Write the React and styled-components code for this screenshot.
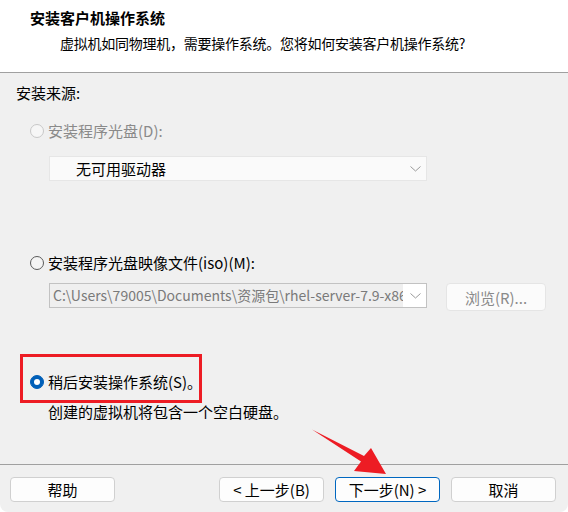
import React from "react";
import styled, { createGlobalStyle } from "styled-components";

const Global = createGlobalStyle`
  html, body { margin: 0; padding: 0; background: #ffffff; }
  body { font-family: "Microsoft YaHei", "Noto Sans CJK SC", "Noto Sans", sans-serif; }
  * { box-sizing: border-box; }
`;

const Window = styled.div`
  position: relative;
  width: 568px;
  height: 512px;
  background: #f0f0f0;
  display: flex;
  flex-direction: column;
  overflow: hidden;
  border-radius: 0 0 8px 8px;
  font-size: 15px;
  color: #000;
`;

const Header = styled.header`
  height: 73px;
  flex: none;
  background: #ffffff;
  border-bottom: 1px solid #a0a0a0;
  padding: 8px 0 0 30px;
  display: flex;
  flex-direction: column;
`;

const Title = styled.h1`
  margin: 0;
  font-size: 15px;
  font-weight: 700;
  line-height: 20px;
`;

const Subtitle = styled.p`
  margin: 5px 0 0 30px;
  font-size: 14px;
  letter-spacing: -0.25px;
  line-height: 20px;
`;

const Body = styled.main`
  flex: 1;
  padding-left: 16px;
  display: flex;
  flex-direction: column;
  align-items: flex-start;
`;

const Line = styled.div`
  height: 20px;
  line-height: 20px;
  white-space: nowrap;
  margin-top: ${(p) => p.$top || 0}px;
  margin-left: ${(p) => p.$left || 0}px;
`;

const RadioRow = styled.label`
  position: relative;
  display: flex;
  align-items: center;
  gap: 4px;
  height: 20px;
  line-height: 20px;
  white-space: nowrap;
  margin-top: ${(p) => p.$top}px;
  margin-left: 14px;
  color: ${(p) => (p.$disabled ? "#8a8a8a" : "#000")};
`;

const Circle = styled.span`
  width: 14px;
  height: 14px;
  border-radius: 50%;
  flex: none;
  display: flex;
  align-items: center;
  justify-content: center;
  background: ${(p) => (p.$checked ? "#005fb8" : p.$disabled ? "#f6f6f6" : "#f4f4f4")};
  border: 1px solid ${(p) => (p.$checked ? "#005fb8" : p.$disabled ? "#c8c8c8" : "#5a5a5a")};
  &::after {
    content: "";
    display: ${(p) => (p.$checked ? "block" : "none")};
    width: 6px;
    height: 6px;
    border-radius: 50%;
    background: #ffffff;
  }
`;

const Highlight = styled.span`
  position: absolute;
  left: -10px;
  top: -18px;
  width: 182px;
  height: 49px;
  border: 3px solid #ed1c24;
  pointer-events: none;
`;

const Select = styled.div`
  margin-top: ${(p) => p.$top}px;
  margin-left: 33px;
  width: 378px;
  height: 25px;
  display: flex;
  align-items: center;
  background: ${(p) => (p.$boxed ? "#ffffff" : "#fafafa")};
  border: 1px solid ${(p) => (p.$boxed ? "#c2c2c2" : "#e6e6e6")};
`;

const SelectText = styled.span`
  flex: 1;
  min-width: 0;
  overflow: hidden;
  white-space: nowrap;
  font-size: ${(p) => p.$size || 15}px;
  line-height: 23px;
  padding-left: ${(p) => p.$pad}px;
  color: ${(p) => p.$color};
  background: ${(p) => p.$bg || "transparent"};
  align-self: stretch;
`;

const Chevron = styled.svg`
  flex: none;
  width: 11px;
  height: 6px;
  margin: 0 5px 0 7px;
`;

const ComboRow = styled.div`
  display: flex;
  align-items: flex-start;
  gap: 19px;
  margin-top: 10px;
`;

const Browse = styled.button`
  width: 100px;
  height: 28px;
  border: 1px solid #e5e5e5;
  border-radius: 4px;
  background: #fbfbfb;
  color: #8a8a8a;
  font: inherit;
  font-size: 15px;
  padding: 0;
`;

const Footer = styled.footer`
  flex: none;
  height: 48px;
  border-top: 1px solid #a0a0a0;
  padding: 12px 12px 0 10px;
  display: flex;
  gap: 11px;
`;

const Spacer = styled.div`
  flex: 1;
`;

const Button = styled.button`
  width: 105px;
  height: 25px;
  border-radius: 4px;
  border: 1px solid ${(p) => (p.$primary ? "#0067c0" : "#d0d0d0")};
  background: #fdfdfd;
  color: #000;
  font: inherit;
  font-size: 15px;
  line-height: 23px;
  padding: 0;
`;

const Arrow = styled.svg`
  position: absolute;
  left: 0;
  top: 0;
  width: 568px;
  height: 512px;
  pointer-events: none;
`;

const ChevronIcon = () => (
  <Chevron viewBox="0 0 11 6">
    <path d="M0.5 0.5 L5.5 5 L10.5 0.5" fill="none" stroke="#9a9a9a" strokeWidth="1" />
  </Chevron>
);

export default function App() {
  return (
    <>
      <Global />
      <Window>
        <Header>
          <Title>安装客户机操作系统</Title>
          <Subtitle>虚拟机如同物理机，需要操作系统。您将如何安装客户机操作系统?</Subtitle>
        </Header>
        <Body>
          <Line $top={10}>安装来源:</Line>
          <RadioRow $top={18} $disabled>
            <Circle $disabled />
            安装程序光盘(D):
          </RadioRow>
          <Select $top={15}>
            <SelectText $pad={26} $color="#000">无可用驱动器</SelectText>
            <ChevronIcon />
          </Select>
          <RadioRow $top={72}>
            <Circle />
            安装程序光盘映像文件(iso)(M):
          </RadioRow>
          <ComboRow>
            <Select $top={0} $boxed>
              <SelectText $pad={3} $size={14} $color="#7a7a7a" $bg="#efefef">
                C:\Users\79005\Documents\资源包\rhel-server-7.9-x86_64-dvd.iso
              </SelectText>
              <ChevronIcon />
            </Select>
            <Browse>浏览(R)...</Browse>
          </ComboRow>
          <RadioRow $top={61}>
            <Circle $checked />
            稍后安装操作系统(S)。
            <Highlight />
          </RadioRow>
          <Line $top={10} $left={32}>创建的虚拟机将包含一个空白硬盘。</Line>
        </Body>
        <Footer>
          <Button>帮助</Button>
          <Spacer />
          <Button>&lt; 上一步(B)</Button>
          <Button $primary>下一步(N) &gt;</Button>
          <Button>取消</Button>
        </Footer>
        <Arrow viewBox="0 0 568 512">
          <polygon
            points="312,429.5 364,456 371,448 386,474 354,471 361,461.5"
            fill="#ed1c24"
          />
        </Arrow>
      </Window>
    </>
  );
}
